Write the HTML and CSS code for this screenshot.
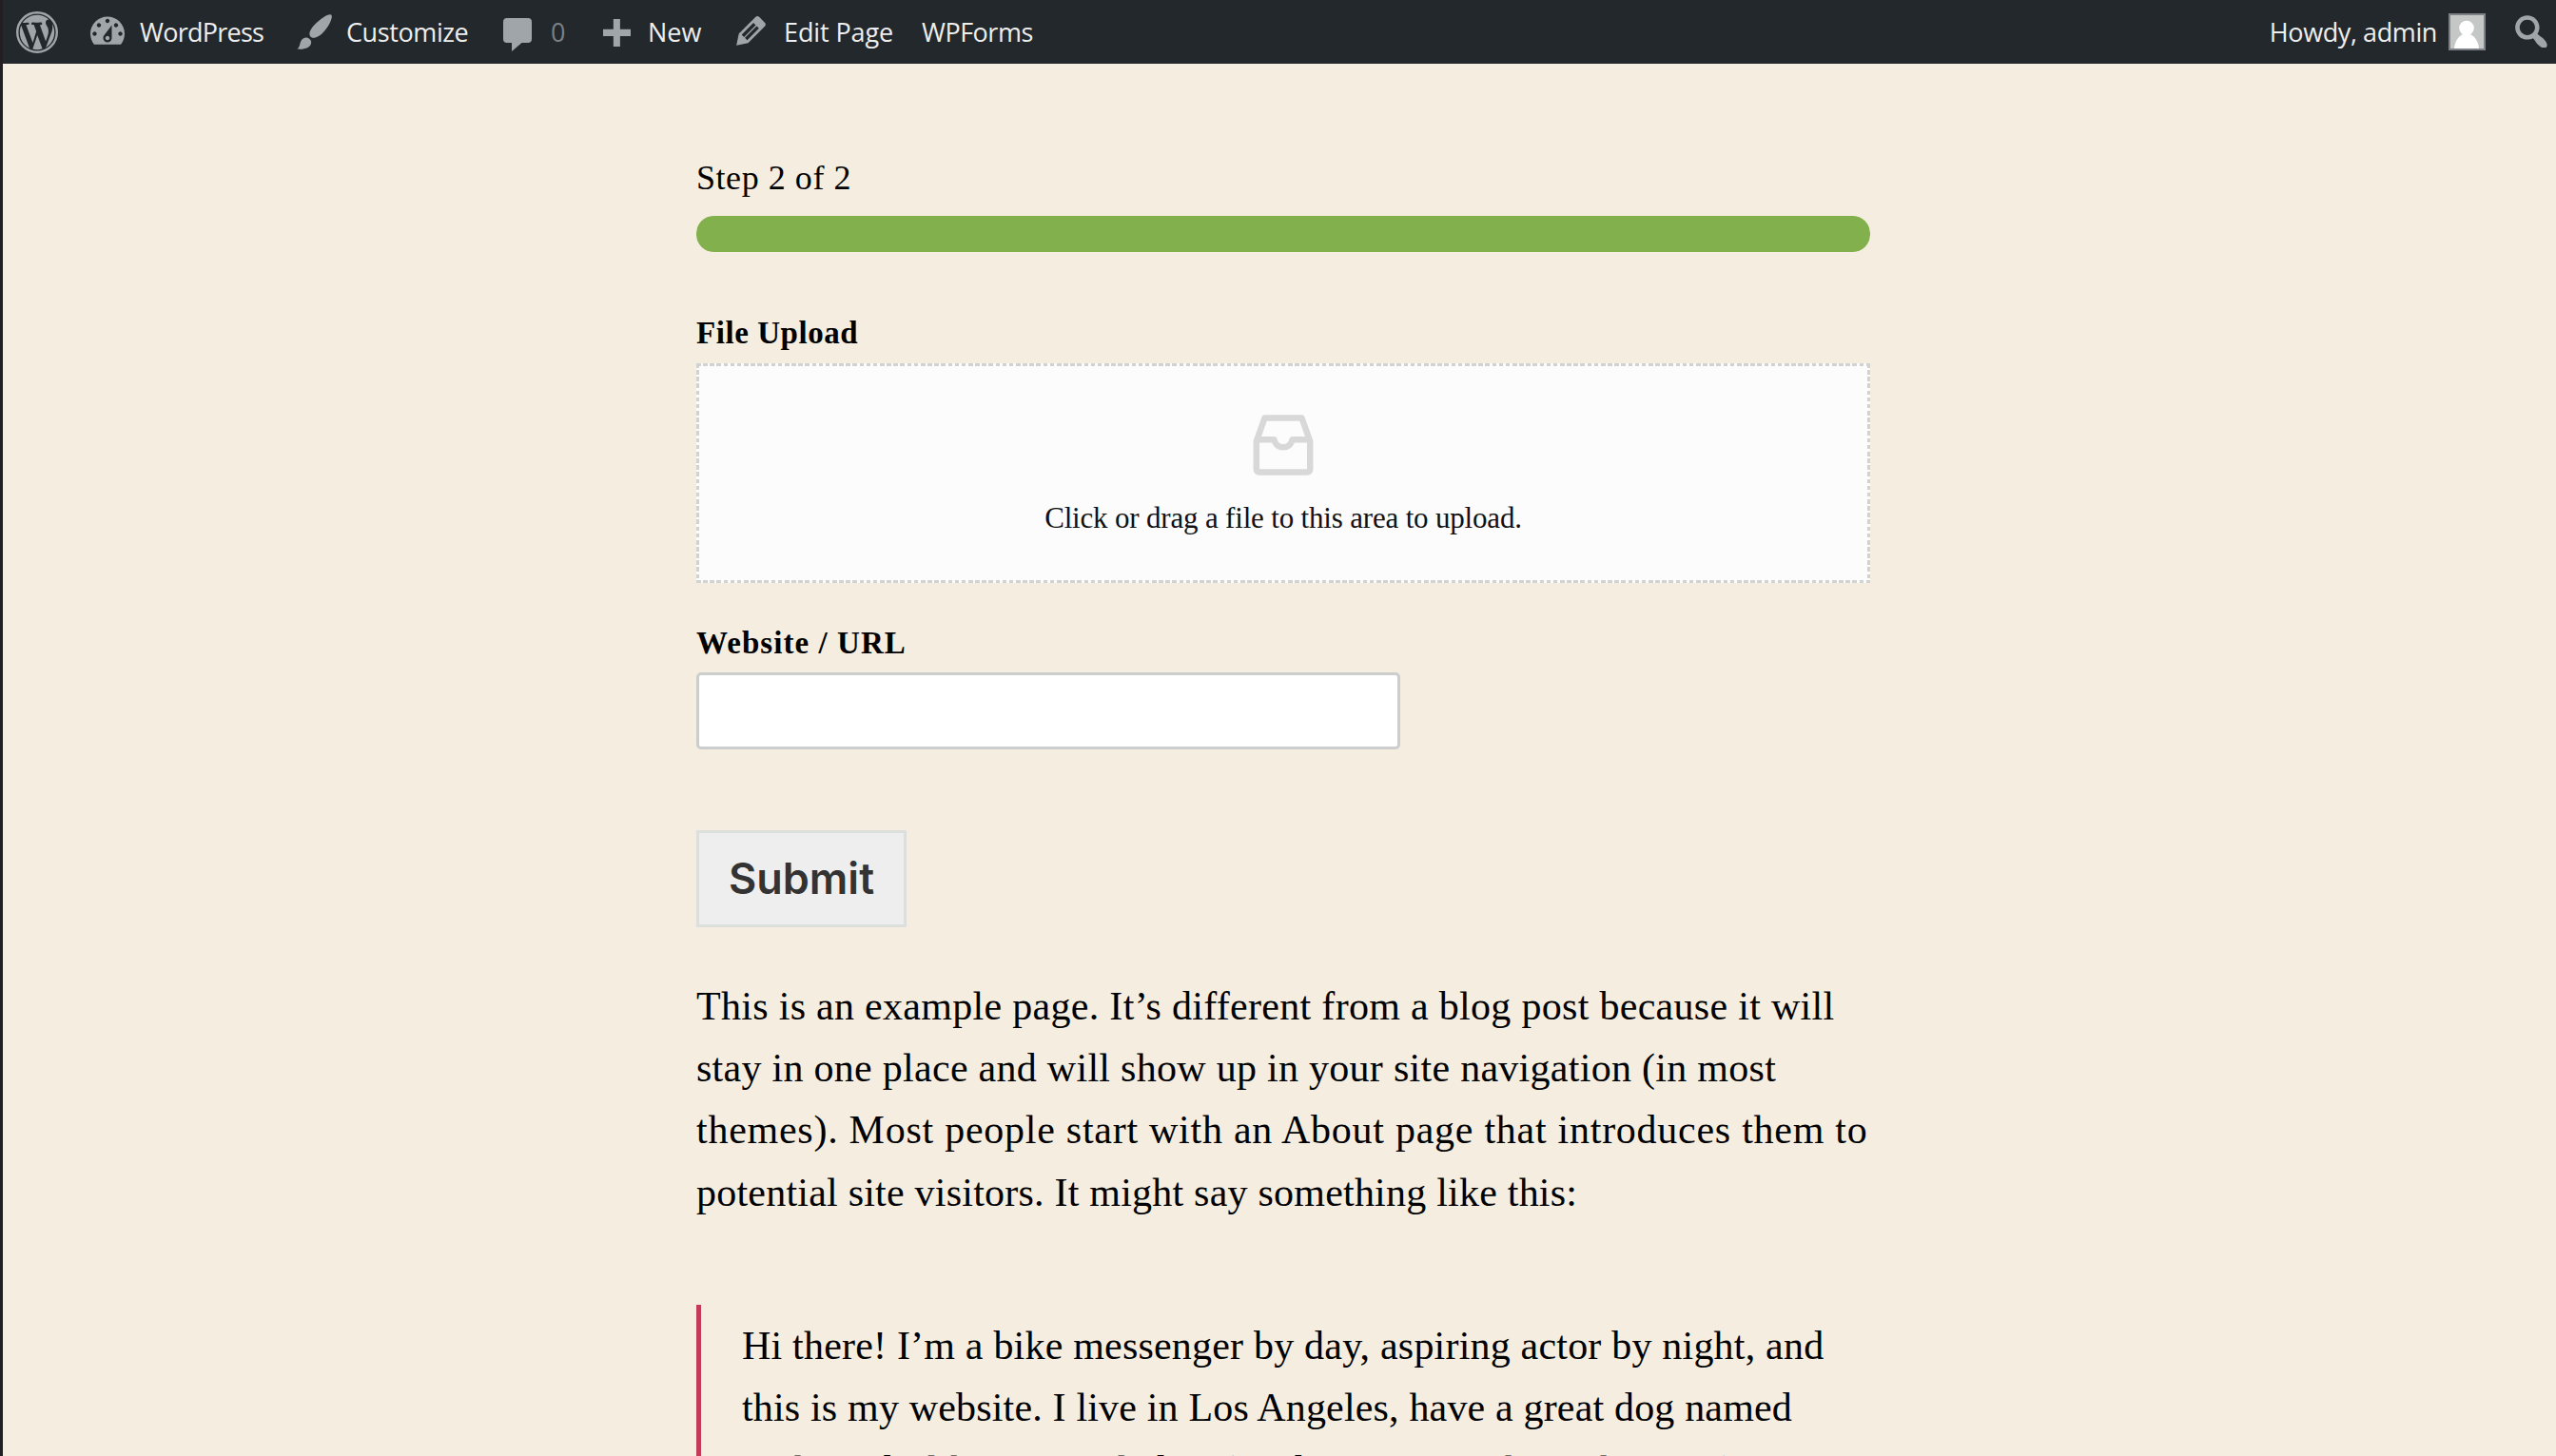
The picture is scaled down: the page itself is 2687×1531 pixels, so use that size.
FILE: index.html
```
<!DOCTYPE html>
<html lang="en">
<head>
<meta charset="UTF-8">
<meta name="viewport" content="width=device-width, initial-scale=1">
<title>Sample Page</title>
<link rel="stylesheet" href="styles.css">
</head>
<body>

<header class="adminbar">
<nav class="adminbar-left">
    <a class="item item-logo" href="#" title="About WordPress">
        <svg class="ico ico-logo" viewBox="0 0 20 20">
            <circle cx="10" cy="10" r="9.45" fill="none" stroke="currentColor" stroke-width="1.1"/>
            <path transform="translate(.7 .7) scale(.93)" d="M7.78 15.37L4.37 6.22c.55-.02 1.17-.08 1.17-.08.5-.06.44-1.13-.06-1.11 0 0-1.45.11-2.37.11-.18 0-.37 0-.58-.01C4.12 2.69 6.87 1.11 10 1.11c2.33 0 4.45.87 6.05 2.34-.68-.11-1.65.39-1.65 1.58 0 .74.45 1.36.9 2.1.35.61.55 1.36.55 2.46 0 1.49-1.4 5-1.4 5l-3.03-8.37c.54-.02.82-.17.82-.17.5-.05.44-1.25-.06-1.22 0 0-1.44.12-2.38.12-.87 0-2.33-.12-2.33-.12-.5-.03-.56 1.2-.06 1.22l.92.08 1.26 3.41zM17.41 10c.24-.64.74-1.87.43-4.25.7 1.29 1.05 2.71 1.05 4.25 0 3.29-1.73 6.24-4.4 7.78.97-2.59 1.94-5.2 2.92-7.78zM6.1 18.09C3.12 16.65 1.11 13.53 1.11 10c0-1.3.23-2.48.72-3.59C3.25 10.3 4.67 14.2 6.1 18.09zm4.03-6.63l2.58 6.98c-.86.29-1.76.45-2.71.45-.79 0-1.57-.11-2.29-.33.81-2.38 1.62-4.74 2.42-7.1z"/>
        </svg>
    </a>
    <a class="item item-site" href="#">
        <svg class="ico ico-site" viewBox="2 3 16 13">
            <path fill-rule="evenodd" d="M3.76 16h12.48c1.1-1.37 1.76-3.11 1.76-5 0-4.42-3.58-8-8-8s-8 3.58-8 8c0 1.89.66 3.63 1.76 5zM10 4c.55 0 1 .45 1 1s-.45 1-1 1-1-.45-1-1 .45-1 1-1zM6 6c.55 0 1 .45 1 1s-.45 1-1 1-1-.45-1-1 .45-1 1-1zm8 0c.55 0 1 .45 1 1s-.45 1-1 1-1-.45-1-1 .45-1 1-1zm-5.37 5.55L12 7v6c0 1.1-.9 2-2 2s-2-.9-2-2c0-.57.24-1.08.63-1.45zM4 10c.55 0 1 .45 1 1s-.45 1-1 1-1-.45-1-1 .45-1 1-1zm12 0c.55 0 1 .45 1 1s-.45 1-1 1-1-.45-1-1 .45-1 1-1zm-5 3c0-.55-.45-1-1-1s-1 .45-1 1 .45 1 1 1 1-.45 1-1z"/>
        </svg>
        <span>WordPress</span>
    </a>
    <a class="item item-customize" href="#">
        <svg class="ico ico-customize" viewBox="0 0 37 37">
            <path d="M36 .6c1.4 1 .9 3.2-.3 6.300C33.500 12.500 29 18.500 24.500 22c-3 2.300-6 3.100-8.300 2.700-2.200-.6-3.300-3-2.600-5.700 1-4 5.400-9 10.400-12.800C28.500 2.600 34 -.8 36 .6z"/>
            <path d="M8.500 24.800c2.600-.8 5.200.6 6.300 3 1.100 2.700-.4 5.600-3.200 7.200C8.500 36.700 4 37 .2 36.600c2.300-1.600 2.600-3.400 3.300-6.200.7-2.800 2.300-4.800 5-5.600z"/>
        </svg>
        <span>Customize</span>
    </a>
    <a class="item item-comments" href="#">
        <svg class="ico ico-comments" viewBox="0 0 30 36">
            <path d="M4 1h22a4 4 0 0 1 4 4v18a4 4 0 0 1-4 4h-6.500L9 36V27H4a4 4 0 0 1-4-4V5a4 4 0 0 1 4-4z"/>
        </svg>
        <span>0</span>
    </a>
    <a class="item item-new" href="#">
        <svg class="ico ico-new" viewBox="0 0 30 30">
            <path d="M11.200 0h7.300v11.200H30v7.300H18.500V30h-7.300V18.500H0v-7.300h11.200z"/>
        </svg>
        <span>New</span>
    </a>
    <a class="item item-edit" href="#">
        <svg class="ico ico-edit" viewBox="3 3 14 14">
            <path fill-rule="evenodd" d="M13.89 3.39l2.71 2.72c.46.46.42 1.24.03 1.64l-8.01 8.020-5.560 1.160 1.160-5.580s7.600-7.630 7.990-8.030c.39-.39 1.220-.39 1.680.07zm-2.730 2.790l-5.590 5.610 1.110 1.110 5.540-5.650zm-2.970 8.230l5.580-5.600-1.070-1.080-5.590 5.600z"/>
        </svg>
        <span>Edit Page</span>
    </a>
    <a class="item item-wpforms" href="#"><span>WPForms</span></a>
</nav>
<div class="adminbar-right">
    <a class="item item-user" href="#">
        <span>Howdy, admin</span>
        <svg class="avatar" viewBox="0 0 39 39">
            <rect width="39" height="39" fill="#7d8187"/>
            <rect x="2" y="2" width="35" height="35" fill="#c5c6c6"/>
            <circle cx="19" cy="15.500" r="7.800" fill="#fff"/>
            <path d="M6 37c.5-6.500 3.500-12 8.500-14.800h9c5 2.800 8 8.300 8.500 14.800z" fill="#fff"/>
        </svg>
    </a>
    <a class="item item-search" href="#">
        <svg class="ico ico-search" viewBox="2.700 2.500 14.700 14.700">
            <path fill-rule="evenodd" d="M12.140 4.180c1.870 1.870 2.110 4.750.72 6.890.12.1.22.21.36.31.2.16.47.36.81.59.34.24.56.39.66.47.42.31.73.57.94.78.32.32.6.65.84 1 .25.35.44.69.59 1.040.14.35.21.68.18 1-.02.32-.14.59-.36.81s-.49.34-.81.36c-.31.02-.65-.04-.99-.19-.35-.14-.7-.34-1.040-.59-.35-.24-.68-.52-1-.84-.21-.21-.47-.52-.77-.93-.1-.13-.25-.35-.47-.66-.22-.32-.4-.57-.56-.78-.16-.2-.29-.35-.44-.5-2.070 1.090-4.690.76-6.440-.98-2.140-2.150-2.140-5.640 0-7.780 2.150-2.150 5.630-2.150 7.780 0zm-1.410 6.360c1.360-1.370 1.360-3.580 0-4.950-1.370-1.370-3.590-1.370-4.950 0-1.370 1.370-1.370 3.580 0 4.950 1.360 1.370 3.580 1.370 4.950 0z"/>
        </svg>
    </a>
</div>
</header>

<main class="content">

<form class="form" action="#" method="post">

<div class="progress">
    <div class="progress-title">Step 2 of 2</div>
    <div class="progress-track"><div class="progress-fill" style="width:100%"></div></div>
</div>

<div class="field field-upload">
    <label class="label label-upload">File Upload</label>
    <div class="uploader">
        <svg class="uploader-icon" viewBox="0 0 64 64">
            <path d="M12.500 3.500h39L60.200 28v29.500a3 3 0 0 1-3 3H6.800a3 3 0 0 1-3-3V28z"/>
            <path d="M4 26.300h18.500c1 5 4.500 8 9.500 8s8.500-3 9.500-8H60"/>
        </svg>
        <span class="uploader-text">Click or drag a file to this area to upload.</span>
    </div>
</div>

<div class="field field-url">
    <label class="label label-url" for="url">Website / URL</label>
    <input class="input" id="url" name="url" type="url">
</div>

<button class="submit" type="submit">Submit</button>

</form>

<p class="text">
    <span class="line l1">This is an example page. It’s different from a blog post because it will</span>
    <span class="line l2">stay in one place and will show up in your site navigation (in most</span>
    <span class="line l3">themes). Most people start with an About page that introduces them to</span>
    <span class="line l4">potential site visitors. It might say something like this:</span>
</p>

<blockquote class="quote">
    <p class="text">
        <span class="line l5">Hi there! I’m a bike messenger by day, aspiring actor by night, and</span>
        <span class="line l6">this is my website. I live in Los Angeles, have a great dog named</span>
        <span class="line l7">Jack, and I like piña coladas. (And gettin’ caught in the rain.)</span>
    </p>
</blockquote>

</main>

</body>
</html>
```
FILE: styles.css
```
*
{
box-sizing:border-box;
}

html
{
overflow:hidden;
}

body
{
margin:0;
height:1531px;
overflow:hidden;
background:#f5eee0;
border-left:3px solid #211f22;
color:#000;
font-family:"Liberation Serif", serif;
}

/* admin bar */

.adminbar
{
display:flex;
justify-content:space-between;
height:67px;
background:#23282d;
font-family:"Open Sans", sans-serif;
font-size:27px;
}

.adminbar-left,
.adminbar-right
{
display:flex;
}

.item
{
display:flex;
align-items:center;
height:67px;
color:#eee;
text-decoration:none;
white-space:nowrap;
}

.ico
{
display:block;
flex:none;
fill:currentColor;
color:#a0a5aa;
}

.item-logo { padding-left:14px; width:92px; }
.ico-logo { width:44px; height:44px; }

.item-site { width:217px; letter-spacing:-0.75px; }
.ico-site { width:36px; height:30px; margin:-3px 16px 0 0; }

.item-customize { width:217px; letter-spacing:-0.4px; }
.ico-customize { width:37px; height:37px; margin-right:15px; }

.item-comments { width:105px; }
.item-comments span { color:#7c8085; }
.ico-comments { width:30px; height:36px; margin:4px 20px 0 0; }

.item-new { width:140px; }
.ico-new { width:29px; height:29px; margin:2px 18px 0 0; }

.item-edit { width:195px; letter-spacing:-0.1px; }
.ico-edit { width:31px; height:31px; margin:-2px 19px 0 0; }

.item-wpforms { letter-spacing:-0.5px; }

.item-user { letter-spacing:-0.4px; }
.avatar { width:39px; height:39px; margin-left:12px; }

.item-search { padding:0 9px 0 31px; }
.ico-search { width:34px; height:34px; margin-top:-2px; }

/* page content */

.content
{
width:1234px;
margin:0 0 0 729px;
padding-top:100px;
}

.progress-title
{
font-size:36px;
line-height:40px;
letter-spacing:0.55px;
margin-bottom:20px;
}

.progress-track,
.progress-fill
{
height:38px;
border-radius:18px;
}

.progress-track
{
overflow:hidden;
}

.progress-fill
{
background:#81b04d;
}

.label
{
display:block;
font-size:33px;
font-weight:bold;
line-height:40px;
margin-bottom:12px;
}

.label-upload { letter-spacing:0.55px; }
.label-url { letter-spacing:1.05px; }

.field-upload
{
margin-top:65px;
}

.uploader
{
display:flex;
flex-direction:column;
align-items:center;
height:231px;
padding-top:54px;
background:
repeating-linear-gradient(90deg, #d0d3d2 0 4.6px, transparent 4.6px 7.15px) 0 0 / 100% 3px no-repeat,
repeating-linear-gradient(90deg, #d0d3d2 0 4.6px, transparent 4.6px 7.15px) 0 100% / 100% 3px no-repeat,
repeating-linear-gradient(180deg, #d0d3d2 0 4.6px, transparent 4.6px 7.15px) 0 0 / 3px 100% no-repeat,
repeating-linear-gradient(180deg, #d0d3d2 0 4.6px, transparent 4.6px 7.15px) 100% 0 / 3px 100% no-repeat,
#fcfcfc;
}

.uploader-icon
{
width:64px;
height:64px;
fill:none;
stroke:#d8d8d8;
stroke-width:6.5;
stroke-linejoin:round;
}

.uploader-text
{
margin-top:25px;
font-size:31px;
line-height:40px;
letter-spacing:-0.18px;
color:#111;
}

.field-url
{
margin-top:43px;
}

.label-url
{
margin-bottom:11px;
}

.input
{
display:block;
width:740px;
height:81px;
padding:0 16px;
border:3px solid #cccecd;
border-radius:5px;
background:#fff;
font-size:33px;
}

.submit
{
display:block;
width:221px;
height:102px;
margin-top:85px;
padding:0 0 2px;
border:3px solid #dddfdd;
border-radius:0;
background:#eee;
color:#333;
font-family:Inter, sans-serif;
font-size:45px;
font-weight:600;
}

.text
{
margin:51px 0 0;
font-size:42px;
line-height:65.2px;
}

.line
{
display:block;
white-space:nowrap;
}

.l1 { letter-spacing:0.3px; }
.l2 { letter-spacing:0.28px; }
.l3 { letter-spacing:0.74px; }
.l4 { letter-spacing:0.22px; }
.l5 { letter-spacing:0.2px; }
.l6 { letter-spacing:0.17px; }
.l7 { letter-spacing:0.3px; padding-top:1px; }

.quote
{
margin:85px 0 0;
padding:11px 0 0 43px;
border-left:5px solid #c43b5a;
}

.quote .text
{
margin:0;
}
```
